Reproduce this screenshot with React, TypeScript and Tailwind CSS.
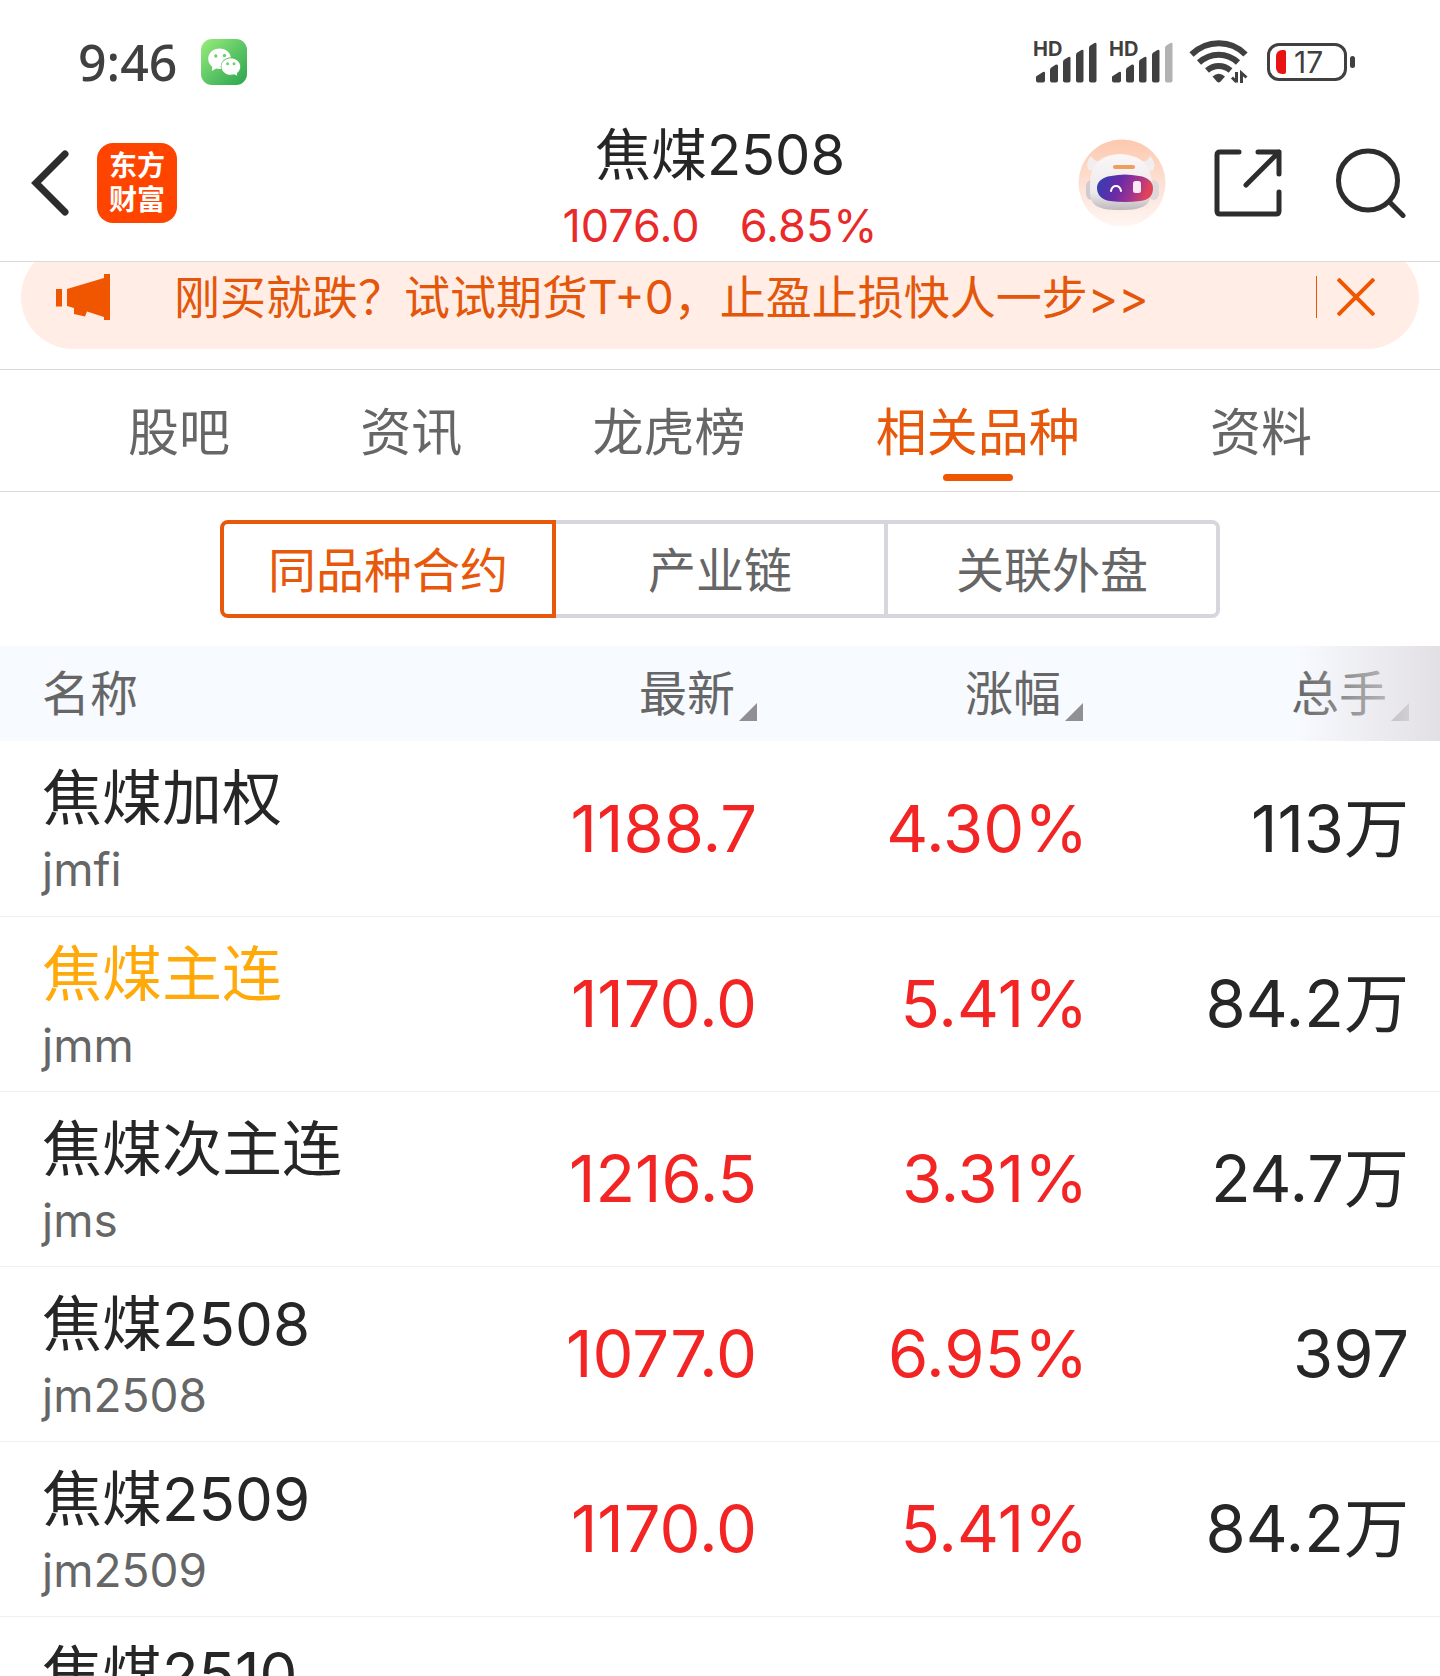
import clsx from "clsx"

const TABS = ["股吧", "资讯", "龙虎榜", "相关品种", "资料"]
const SEGMENTS = ["同品种合约", "产业链", "关联外盘"]
const COLUMNS = ["最新", "涨幅", "总手"]

type Contract = {
  name: string
  code?: string
  price?: string
  change?: string
  volume?: string
  main?: boolean
}

const CONTRACTS: Contract[] = [
  { name: "焦煤加权", code: "jmfi", price: "1188.7", change: "4.30%", volume: "113万" },
  { name: "焦煤主连", code: "jmm", price: "1170.0", change: "5.41%", volume: "84.2万", main: true },
  { name: "焦煤次主连", code: "jms", price: "1216.5", change: "3.31%", volume: "24.7万" },
  { name: "焦煤2508", code: "jm2508", price: "1077.0", change: "6.95%", volume: "397" },
  { name: "焦煤2509", code: "jm2509", price: "1170.0", change: "5.41%", volume: "84.2万" },
  { name: "焦煤2510" },
]

function WeChatIcon() {
  return (
    <svg viewBox="0 0 46 46" className="size-[46px]" aria-hidden="true">
      <defs>
        <linearGradient id="wechat" x1="0" y1="0" x2="1" y2="1">
          <stop offset="0" stopColor="#98ee7c" />
          <stop offset="0.5" stopColor="#5fc766" />
          <stop offset="1" stopColor="#2ba44e" />
        </linearGradient>
      </defs>
      <rect width="46" height="46" rx="11" fill="url(#wechat)" />
      <path
        d="M18.600 9.500c-6.500 0-11.400 4.500-11.400 10.300 0 3.300 1.500 6 4 7.900l-.3 4.300 4.200-2.400c1.100.3 2.300.5 3.500.5 6.500 0 11.400-4.500 11.400-10.300S25.100 9.500 18.600 9.500z"
        fill="#fff"
      />
      <ellipse cx="30" cy="27.500" rx="10.300" ry="9.200" fill="#55bd61" />
      <path
        d="M29.800 19.200c5.300 0 9.400 3.700 9.400 8.300 0 2.700-1.300 4.900-3.200 6.400l.2 2.900-3-1.500c-1.100.3-2.200.5-3.400.5-5.300 0-9.400-3.700-9.400-8.300s4.100-8.300 9.400-8.300z"
        fill="#fff"
      />
      <g fill="#6fd06c">
        <circle cx="14.800" cy="17" r="1.700" />
        <circle cx="23.500" cy="16.500" r="1.700" />
        <circle cx="26.600" cy="24.700" r="1.500" />
        <circle cx="33" cy="24.700" r="1.500" />
      </g>
    </svg>
  )
}

function Signal({ weak = false }: { weak?: boolean }) {
  return (
    <div className="relative">
      <svg viewBox="0 0 64 42" className="h-[42px] w-16" fill="#404040" aria-hidden="true">
        <path d="M3 35.500l7-4.500q2-1 2 1v7.500q0 2-2 2H5q-2 0-2-2z" />
        <path d="M17 29q0-1.500 1-2.200l4.500-3Q25 22.800 25 25v14.500q0 2-2 2h-4q-2 0-2-2z" />
        <path d="M30 21q0-1.500 1-2.200l4-2.600q2.500-1 2.500 1v22.300q0 2-2 2H32q-2 0-2-2z" />
        <path d="M43 14q0-1.500 1-2.200l4-2.600q2.500-1 2.500 1v29.300q0 2-2 2H45q-2 0-2-2z" />
        <path
          d="M56 7q0-1.500 1-2.200l4-2.600q2.500-1 2.500 1v36.300q0 2-2 2H58q-2 0-2-2z"
          fill={weak ? "#b3b1b3" : "#404040"}
        />
      </svg>
      <span className="absolute -top-1 left-0 text-[20px] leading-6 font-bold">HD</span>
    </div>
  )
}

function WifiIcon() {
  return (
    <svg viewBox="0 0 60 44" className="h-11 w-[60px]" fill="none" stroke="#404040" aria-hidden="true">
      <path d="M2.500 14.500C18-.5 42-.5 56.500 14.500" strokeWidth="6" />
      <path d="M10 22.500c11.500-10.500 28-10.500 39 0" strokeWidth="6" />
      <path d="M18 30.500c7-6 16.500-6 23.500 0" strokeWidth="6" />
      <path d="M23.500 36.500q6.300-5.500 12.500 0l-4.600 5.200q-1.700 1.600-3.400 0z" fill="#404040" stroke="none" />
      <path d="M47.500 32v10.500M43 37.500l4.500 4.500M52.500 43V33l5 4.500" strokeWidth="3" />
    </svg>
  )
}

function Battery() {
  return (
    <div className="flex items-center gap-[3px]">
      <div className="flex h-[38px] w-20 items-center gap-2 rounded-xl border-3 border-[#404040] pl-[6px]">
        <span className="h-6 w-[10px] rounded-l-md rounded-r-xs bg-[#e81414]" />
        <span className="text-[30px] leading-8">17</span>
      </div>
      <span className="h-3 w-[5px] rounded-sm bg-[#404040]" />
    </div>
  )
}

function RobotIcon() {
  return (
    <svg viewBox="0 0 88 88" className="size-[88px]" aria-hidden="true">
      <defs>
        <linearGradient id="halo" x1="0" y1="0" x2="0" y2="1">
          <stop offset="0" stopColor="#fdc8ae" />
          <stop offset="0.500" stopColor="#fde0d3" />
          <stop offset="1" stopColor="#fff6f3" />
        </linearGradient>
        <linearGradient id="shell" x1="0" y1="0" x2="0" y2="1">
          <stop offset="0" stopColor="#fbf7f7" />
          <stop offset="0.700" stopColor="#ece9ed" />
          <stop offset="1" stopColor="#bdb9bd" />
        </linearGradient>
        <linearGradient id="visor" x1="0" y1="0" x2="1" y2="0.200">
          <stop offset="0" stopColor="#2c41b4" />
          <stop offset="0.450" stopColor="#6a2ba6" />
          <stop offset="0.750" stopColor="#a3348f" />
          <stop offset="1" stopColor="#e24358" />
        </linearGradient>
      </defs>
      <circle cx="44" cy="44" r="43.500" fill="url(#halo)" />
      <path d="M13 17c-4 4-5 10-2 14l9 3 10-13c-7 3-14 2-17-4z" fill="#f3eeee" />
      <path d="M72 17c4 4 6 10 3 14l-8 3-10-13c7 3 13 2 15-4z" fill="#f3eeee" />
      <rect x="8" y="41" width="12" height="20" rx="6" fill="#cfcbd0" />
      <rect x="70" y="41" width="11" height="20" rx="6" fill="#dcd8dc" />
      <path
        d="M30 17q12-4 24 0c13 3 20 15 20 28 0 10-1 16-5 20-5 5-15 6-27 6s-21-1-26-6c-4-4-4-10-4-20 0-13 5-24 18-28z"
        fill="url(#shell)"
      />
      <rect x="35" y="26" width="22" height="4" rx="2" fill="#ef9f5c" />
      <path
        d="M33 37q14-3 28 0c9 1 14 6 14 12 0 8-4 12-13 13q-15 2-30 0c-8-1-13-6-13-13 0-6 5-11 14-12z"
        fill="url(#visor)"
      />
      <path d="M33 52q1-5 5-5t5 5" fill="none" stroke="#fff" strokeWidth="2" strokeLinecap="round" />
      <rect x="55" y="42" width="8" height="12" rx="2.500" fill="#fbe9f3" />
    </svg>
  )
}

function ShareIcon() {
  return (
    <svg
      viewBox="0 0 68 68"
      className="size-[68px]"
      fill="none"
      stroke="#2d2d2d"
      strokeWidth="5"
      strokeLinecap="round"
      strokeLinejoin="round"
      aria-hidden="true"
    >
      <path d="M25 3H6Q3 3 3 6v56q0 3 3 3h56q3 0 3-3V43" />
      <path d="M44 3h21v22M65 3L32 36" />
    </svg>
  )
}

function SearchIcon() {
  return (
    <svg
      viewBox="0 0 70 70"
      className="size-[70px]"
      fill="none"
      stroke="#2d2d2d"
      strokeWidth="5"
      strokeLinecap="round"
      aria-hidden="true"
    >
      <circle cx="32" cy="32.500" r="29.500" />
      <path d="M53.500 54L67 67.500" />
    </svg>
  )
}

function MegaphoneIcon() {
  return (
    <svg viewBox="0 0 54 46" className="h-[46px] w-[54px]" fill="#f05500" aria-hidden="true">
      <path d="M0 15h6v17.500H0zM11 15l37-11V0h6v46h-6v-3L31 37.500l-2 5-11-2.500v-6l-7-2z" />
    </svg>
  )
}

export default function App() {
  return (
    <div className="flex h-screen flex-col overflow-hidden bg-white font-['Inter','Noto_Sans_CJK_SC',sans-serif] text-[#262626]">
      {/* Status bar */}
      <div className="flex h-[116px] shrink-0 items-center justify-between pt-2 pr-[85px] pl-[78px] text-[#404040]">
        <div className="flex items-center gap-6">
          <span className="font-['Noto_Sans'] text-[50px] leading-none font-medium">9:46</span>
          <WeChatIcon />
        </div>
        <div className="flex items-center">
          <div className="flex gap-3">
            <Signal />
            <Signal weak />
          </div>
          <div className="ml-4 flex items-center gap-[18px]">
            <WifiIcon />
            <Battery />
          </div>
        </div>
      </div>

      {/* Header */}
      <header className="grid h-[146px] shrink-0 grid-cols-[1fr_auto_1fr] border-b border-[#d9d9d9]">
        <div className="flex items-center gap-7 pb-3 pl-[31px]">
          <button type="button" aria-label="返回">
            <svg viewBox="0 0 38 66" className="h-[66px] w-[38px]" fill="none" stroke="#2d2d2d" strokeWidth="7" aria-hidden="true">
              <path d="M34 4L5 33l29 29" strokeLinecap="round" />
            </svg>
          </button>
          <a
            href="#"
            className="flex size-20 flex-col items-center justify-center rounded-2xl bg-[#ff4400] text-[28px] leading-[34px] font-bold text-white"
          >
            <span>东方</span>
            <span>财富</span>
          </a>
        </div>
        <div className="text-center">
          <h1 className="text-[56px] leading-[78px]">焦煤2508</h1>
          <p className="flex justify-center gap-10 text-[45px] leading-[64px] text-[#e92a2a]">
            <span>1076.0</span>
            <span>6.85%</span>
          </p>
        </div>
        <div className="flex items-center justify-end pr-[34px] pb-3">
          <button type="button" aria-label="智能助手">
            <RobotIcon />
          </button>
          <button type="button" aria-label="分享" className="ml-12">
            <ShareIcon />
          </button>
          <button type="button" aria-label="搜索" className="ml-[54px]">
            <SearchIcon />
          </button>
        </div>
      </header>

      {/* Promo banner, its top is scrolled under the header */}
      <div className="shrink-0 overflow-hidden border-b border-[#d9d9d9] px-[21px] pb-5">
        <div className="-mt-[17px] flex h-[104px] items-center rounded-full bg-[#ffede6] pr-11 pl-[35px] text-[#e4570a]">
          <MegaphoneIcon />
          <a href="#" className="ml-16 flex-1 text-[46px] leading-[64px]">
            刚买就跌？试试期货T+0，止盈止损快人一步&gt;&gt;
          </a>
          <span className="h-[42px] w-px bg-[#e4570a]" />
          <button type="button" aria-label="关闭" className="ml-5">
            <svg viewBox="0 0 38 38" className="size-[38px]" fill="none" stroke="#f05500" strokeWidth="4" aria-hidden="true">
              <path d="M1 1l36 36M37 1L1 37" />
            </svg>
          </button>
        </div>
      </div>

      {/* Tabs */}
      <nav className="flex h-[122px] shrink-0 justify-between border-b border-[#d9d9d9] px-32">
        {TABS.map((tab) => {
          const active = tab === "相关品种"
          return (
            <button
              key={tab}
              type="button"
              className={clsx("relative pt-1 text-[51px] leading-[72px]", active ? "text-[#e8580a]" : "text-[#666]")}
            >
              {tab}
              {active && (
                <span className="absolute bottom-[10px] left-1/2 h-[7px] w-[70px] -translate-x-1/2 rounded-full bg-[#f05500]" />
              )}
            </button>
          )
        })}
      </nav>

      {/* Segmented control */}
      <div className="flex shrink-0 justify-center px-[220px] py-7">
        {SEGMENTS.map((segment, i) => (
          <button
            key={segment}
            type="button"
            className={clsx(
              "h-[98px] flex-1 border-4 pt-1 text-[48px] leading-[64px]",
              i === 0 ? "rounded-l-lg border-[#e8580a] text-[#e8580a]" : "border-l-0 border-[#d6d6de] text-[#666]",
              i === SEGMENTS.length - 1 && "rounded-r-lg",
            )}
          >
            {segment}
          </button>
        ))}
      </div>

      {/* Contracts */}
      <div className="relative min-h-0 flex-1 overflow-hidden">
        <table className="w-full table-fixed border-collapse">
          <thead>
            <tr className="h-[95px] bg-[#f7faff] text-[48px] leading-[64px] text-[#666]">
              <th className="pl-[42px] text-left font-normal">名称</th>
              {COLUMNS.map((column) => (
                <th key={column} className="w-[326px] pr-[31px] font-normal">
                  <button type="button" className="ml-auto flex items-end gap-1">
                    {column}
                    <svg viewBox="0 0 18 18" className="mb-[5px] size-[18px]" fill="#8f8f94" aria-hidden="true">
                      <path d="M18 0v18H0z" />
                    </svg>
                  </button>
                </th>
              ))}
            </tr>
          </thead>
          <tbody>
            {CONTRACTS.map((contract) => (
              <tr key={contract.name} className="h-[175px] border-b border-[#efefef] text-right text-[65px]">
                <td className="pl-[42px] text-left">
                  <div className={clsx("text-[60px] leading-[82px]", contract.main && "text-[#ffaa0a]")}>
                    {contract.name}
                  </div>
                  <div className="h-[60px] text-[46px] leading-[60px] text-[#666]">{contract.code}</div>
                </td>
                <td className="pr-[31px] text-[#f22424]">{contract.price}</td>
                <td className="pr-[26px] text-[#f22424]">{contract.change}</td>
                <td className="pr-[31px]">{contract.volume}</td>
              </tr>
            ))}
          </tbody>
        </table>
        <div className="pointer-events-none absolute top-0 right-0 h-[95px] w-[144px] bg-linear-to-r from-[#e3e0e4]/0 to-[#e3e0e4]" />
      </div>
    </div>
  )
}
